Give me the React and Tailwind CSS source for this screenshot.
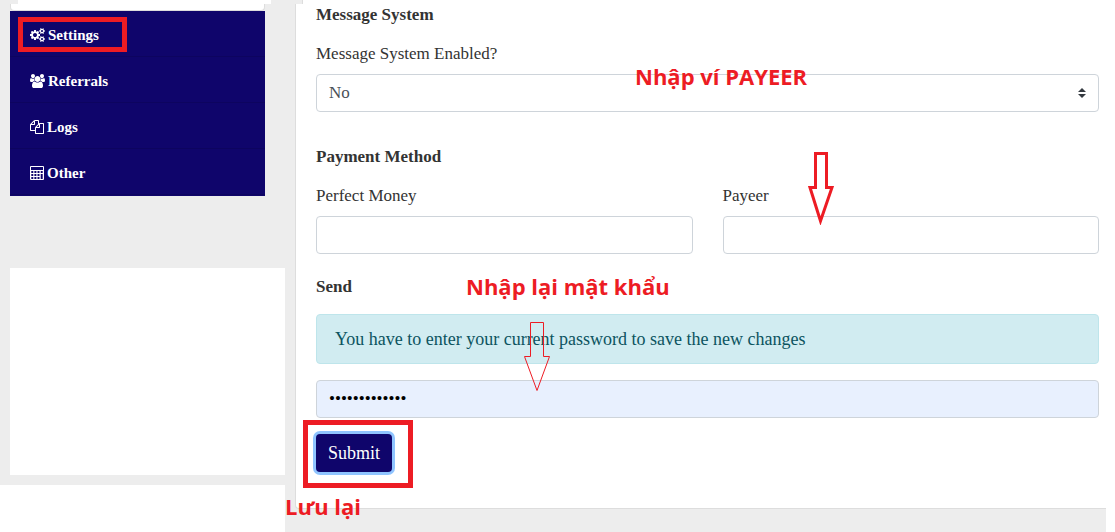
import React from "react";

function GearsIcon() {
  return (
    <svg viewBox="0 0 1920 1792" className="h-[14px] w-[15px]" fill="currentColor" aria-hidden="true">
      <path d="M896 896q0-106-75-181t-181-75-181 75-75 181 75 181 181 75 181-75 75-181zm768 512q0-52-38-90t-90-38-90 38-38 90q0 53 37.5 90.5t90.5 37.5 90.5-37.5 37.5-90.5zm0-1024q0-52-38-90t-90-38-90 38-38 90q0 53 37.5 90.5t90.5 37.5 90.5-37.5 37.5-90.5zm-384 421v185q0 10-7 19.5t-16 10.5l-155 24q-11 35-32 76 34 48 90 115 7 11 7 20 0 12-7 19-23 30-82.5 89.5t-78.5 59.5q-11 0-21-7l-115-90q-37 19-77 31-11 108-23 155-7 24-30 24h-186q-11 0-20-7.5t-10-17.5l-23-153q-34-10-75-31l-118 89q-7 7-20 7-11 0-21-8-144-133-144-160 0-9 7-19 10-14 41-53t47-61q-23-44-35-82l-152-24q-10-1-17-9.5t-7-19.5v-185q0-10 7-19.5t16-10.5l155-24q11-35 32-76-34-48-90-115-7-11-7-20 0-12 7-20 22-30 82-89t79-59q11 0 21 7l115 90q34-18 77-32 11-108 23-154 7-24 30-24h186q11 0 20 7.5t10 17.5l23 153q34 10 75 31l118-89q8-7 20-7 11 0 21 8 144 133 144 160 0 8-7 19-12 16-42 54t-45 60q23 48 34 82l152 23q10 2 17 10.5t7 19.5zm640 533v140q0 16-149 31-12 27-30 52 51 113 51 138 0 4-4 7-122 71-124 71-8 0-46-47t-52-68q-20 2-30 2t-30-2q-14 21-52 68t-46 47q-2 0-124-71-4-3-4-7 0-25 51-138-18-25-30-52-149-15-149-31v-140q0-16 149-31 13-29 30-52-51-113-51-138 0-4 4-7 4-2 35-20t59-34 30-16q8 0 46 46.5t52 67.5q20-2 30-2t30 2q51-71 92-112l6-2q4 0 124 70 4 3 4 7 0 25-51 138 17 23 30 52 149 15 149 31zm0-1024v140q0 16-149 31-12 27-30 52 51 113 51 138 0 4-4 7-122 71-124 71-8 0-46-47t-52-68q-20 2-30 2t-30-2q-14 21-52 68t-46 47q-2 0-124-71-4-3-4-7 0-25 51-138-18-25-30-52-149-15-149-31v-140q0-16 149-31 13-29 30-52-51-113-51-138 0-4 4-7 4-2 35-20t59-34 30-16q8 0 46 46.5t52 67.5q20-2 30-2t30 2q51-71 92-112l6-2q4 0 124 70 4 3 4 7 0 25-51 138 17 23 30 52 149 15 149 31z" />
    </svg>
  );
}

function UsersIcon() {
  return (
    <svg viewBox="0 0 1920 1792" className="h-[14px] w-[15px]" fill="currentColor" aria-hidden="true">
      <path d="M593 896q-162 5-265 128h-134q-82 0-138-40.5t-56-118.5q0-353 124-353 6 0 43.5 21t97.5 42.5 119 21.5q67 0 133-23-5 37-5 66 0 139 81 256zm1071 637q0 120-73 189.5t-194 69.5h-874q-121 0-194-69.5t-73-189.5q0-53 3.5-103.5t14-109 26.5-108.5 43-97.5 62-81 85.5-53.5 111.5-20q10 0 43 21.5t73 48 107 48 135 21.5 135-21.5 107-48 73-48 43-21.5q61 0 111.5 20t85.5 53.5 62 81 43 97.5 26.5 108.5 14 109 3.5 103.5zm-1024-1277q0 106-75 181t-181 75-181-75-75-181 75-181 181-75 181 75 75 181zm704 384q0 159-112.5 271.5t-271.5 112.5-271.5-112.5-112.5-271.5 112.5-271.5 271.5-112.5 271.5 112.5 112.5 271.5zm576 225q0 78-56 118.5t-138 40.5h-134q-103-123-265-128 81-117 81-256 0-29-5-66 66 23 133 23 59 0 119-21.5t97.5-42.5 43.5-21q124 0 124 353zm-128-609q0 106-75 181t-181 75-181-75-75-181 75-181 181-75 181 75 75 181z" />
    </svg>
  );
}

function FilesIcon() {
  return (
    <svg viewBox="0 0 1792 1792" className="h-[14px] w-[14px]" fill="currentColor" aria-hidden="true">
      <path d="M1696 384q40 0 68 28t28 68v1216q0 40-28 68t-68 28h-960q-40 0-68-28t-28-68v-288h-544q-40 0-68-28t-28-68v-672q0-40 20-88t48-76l408-408q28-28 76-48t88-20h416q40 0 68 28t28 68v328q68-40 128-40h416zm-544 213l-299 299h299v-299zm-640-384l-299 299h299v-299zm196 647l316-316v-416h-384v416q0 40-28 68t-68 28h-416v640h512v-256q0-40 20-88t48-76zm956 804v-1152h-384v416q0 40-28 68t-68 28h-416v640h896z" />
    </svg>
  );
}

function CalculatorIcon() {
  return (
    <svg viewBox="0 0 14 14" className="h-[14px] w-[14px]" fill="currentColor" fillRule="evenodd" aria-hidden="true">
      <path d="M1 0h12q1 0 1 1v12q0 1-1 1h-12q-1 0-1-1v-12q0-1 1-1zM1 1v3h12v-3zM1.300 5v2h2v-2zM4.400 5v2h2v-2zM7.500 5v2h2v-2zM10.700 5v2h2v-2zM1.300 8v2h2v-2zM4.400 8v2h2v-2zM7.500 8v2h2v-2zM1.300 11v2h2v-2zM4.400 11v2h2v-2zM7.500 11v2h2v-2zM10.700 8v5h2v-5z" />
    </svg>
  );
}

const menu = [
  { label: "Settings", Icon: GearsIcon, marked: true },
  { label: "Referrals", Icon: UsersIcon },
  { label: "Logs", Icon: FilesIcon },
  { label: "Other", Icon: CalculatorIcon },
];

const field = "block h-[38px] w-full rounded border border-[#ced4da] px-3 text-[#495057]";
const heading = "text-[17px] leading-[22px] font-bold text-[#333333]";
const note = "absolute whitespace-nowrap font-['Open_Sans',sans-serif] text-[22px] leading-7 font-bold text-[#ed1c24]";

function Sidebar() {
  return (
    <aside className="flex w-[285px] shrink-0 flex-col">
      <div className="mr-[14px] ml-[18px] h-1 bg-white" />
      <div className="mr-5 ml-[10px] h-[7px] rounded-b border border-t-0 border-[#dddddd] bg-white" />
      <nav className="mr-5 ml-[10px] bg-[#0f056b] pb-px">
        {menu.map(({ label, Icon, marked }) => (
          <a
            key={label}
            href="#"
            className="relative flex h-[46px] items-center gap-[3px] border-b border-[#0d045f] px-5 pt-[3px] text-[15px] font-bold text-white"
          >
            <Icon />
            <span>{label}</span>
            {marked && <span className="absolute top-[6px] left-2 h-[35px] w-[109px] border-[5px] border-[#ed1c24]" />}
          </a>
        ))}
      </nav>
      <div className="mt-[72px] ml-[10px] h-[207px] bg-white" />
      <div className="mt-[10px] min-h-[47px] grow bg-white" />
    </aside>
  );
}

export default function App() {
  return (
    <div className="min-h-screen bg-white font-['Liberation_Serif',serif] text-[17px] leading-6 text-[#333333]">
      <div className="mr-[9px] flex min-h-screen bg-[#ededed]">
        <Sidebar />
        <main className="min-w-0 grow">
          <div className="-mr-[9px] ml-[17px] h-1 border-l border-[#dddddd] bg-white" />
          <form
            className="relative ml-[10px] rounded-bl border-b border-l border-[#dddddd] bg-white pr-[7px] pb-9 pl-5"
            onSubmit={(e) => e.preventDefault()}
          >
            <h2 className={heading}>Message System</h2>
            <label htmlFor="messages" className="mt-4 mb-2 block">Message System Enabled?</label>
            <div className="relative">
              <select id="messages" className={`${field} appearance-none bg-white`}>
                <option>No</option>
                <option>Yes</option>
              </select>
              <svg viewBox="0 0 4 5" className="pointer-events-none absolute top-[14px] right-3 h-[10px] w-[10px]" fill="#343a40" aria-hidden="true">
                <path d="M2 0L0 2h4zm0 5L0 3h4z" />
              </svg>
              <div className={`${note} -top-3 left-[319px]`}>Nhập ví PAYEER</div>
            </div>

            <h2 className={`${heading} mt-[34px]`}>Payment Method</h2>
            <div className="mt-4 grid grid-cols-2 gap-[30px]">
              <div>
                <label htmlFor="perfect" className="mb-2 block">Perfect Money</label>
                <input id="perfect" type="text" className={`${field} bg-white`} />
              </div>
              <div className="relative">
                <label htmlFor="payeer" className="mb-2 block">Payeer</label>
                <input id="payeer" type="text" className={`${field} bg-white`} />
                <svg viewBox="0 0 26 74" className="absolute -top-[33px] left-[85px] h-[74px] w-[26px]" fill="none" stroke="#ed1c24" strokeWidth="3" aria-hidden="true">
                  <path d="M7.500 2.500h11v34h5.500L12.500 70 2 36.500h5.500z" />
                </svg>
              </div>
            </div>

            <h2 className={`${heading} mt-[22px]`}>Send</h2>
            <div className={`${note} top-[268px] left-[170px]`}>Nhập lại mật khẩu</div>
            <div className="relative mt-4 rounded border border-[#bee5eb] bg-[#d1ecf1] px-[18px] py-3 text-[18px] text-[#0c5460]">
              You have to enter your current password to save the new changes
              <svg viewBox="0 0 27 70" className="absolute top-[7px] left-[207px] h-[70px] w-[27px]" fill="none" stroke="#ed1c24" strokeWidth="1" aria-hidden="true">
                <path d="M6.500.5h13v34h6L13 68.500.5 34.500h6z" />
              </svg>
            </div>
            <input
              type="password"
              aria-label="Current password"
              defaultValue="abcdefghijklm"
              className="mt-4 block h-[38px] w-full rounded border border-[#ced4da] bg-[#e8f0fe] px-3 text-black"
            />
            <div className="relative mt-4 w-fit">
              <button type="submit" className="h-[38px] rounded bg-[#0f056b] px-3 text-[18px] text-white ring-3 ring-[#8fc4ff]">
                Submit
              </button>
              <span className="pointer-events-none absolute -top-[14px] -left-[13px] h-[68px] w-[110px] border-[5px] border-[#ed1c24]" />
              <div className={`${note} top-[58px] -left-[31px]`}>Lưu lại</div>
            </div>
          </form>
        </main>
      </div>
    </div>
  );
}
